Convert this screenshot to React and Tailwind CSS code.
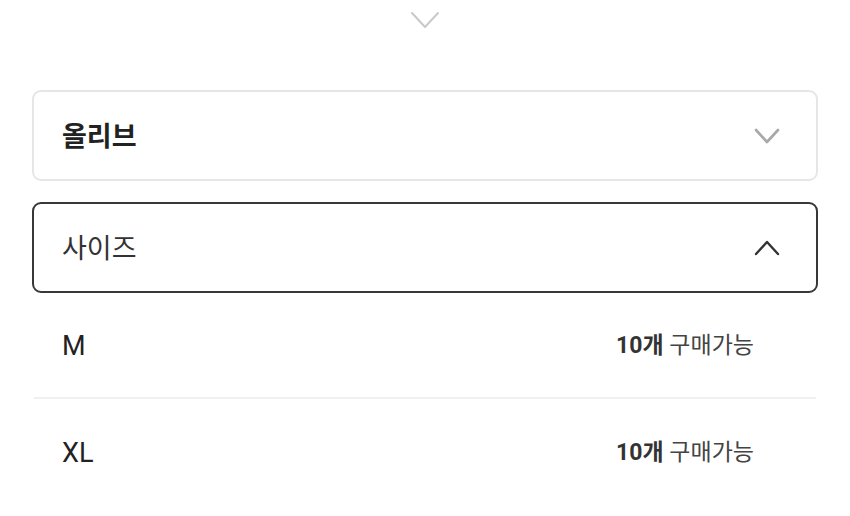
import React from "react";

const font = { fontFamily: 'Roboto, "Noto Sans CJK KR", "Noto Sans", sans-serif' };

function Chevron({ up = false, className = "", width = 24, height = 14, stroke = 2.5 }) {
    const d = up ? `M2 ${height - 2} L${width / 2} 2 L${width - 2} ${height - 2}` : `M2 2 L${width / 2} ${height - 2} L${width - 2} 2`;
    return (
        <svg width={width} height={height} viewBox={`0 0 ${width} ${height}`} className={className} fill="none">
            <path d={d} stroke="currentColor" strokeWidth={stroke} strokeLinecap="round" strokeLinejoin="round" />
        </svg>
    );
}

const sizes = [
    { name: "M", stock: 10 },
    { name: "XL", stock: 10 },
];

export default function App() {
    return (
        <div className="w-[850px] h-[516px] bg-white overflow-hidden" style={font}>
            {/* top toggle */}
            <div className="flex justify-center pt-[11px] h-[90px]">
                <Chevron width={30} height={18} stroke={2} className="text-[#c9c9c9]" />
            </div>

            <div className="px-8 flex flex-col gap-[21px]">
                {/* colour select */}
                <div className="h-[91px] border-2 border-[#e6e6e6] rounded-[9px] flex items-center justify-between pl-[28px] pr-[36px]">
                    <span className="text-[27px] font-bold text-[#222] pt-[3px]">올리브</span>
                    <Chevron className="text-[#a8a8a8]" width={26} height={16} stroke={2.6} />
                </div>

                {/* size select (open) */}
                <div>
                    <div className="h-[91px] border-2 border-[#383838] rounded-[9px] flex items-center justify-between pl-[28px] pr-[36px]">
                        <span className="text-[27px] text-[#333] pt-[3px]">사이즈</span>
                        <Chevron up className="text-[#333]" width={26} height={16} stroke={2.4} />
                    </div>

                    <div className="px-[2px]">
                        {sizes.map((s, i) => (
                            <div
                                key={s.name}
                                className={`h-[106px] flex items-center justify-between pl-[28px] pr-[62px] pt-[3px] ${i === 0 ? "border-b-2 border-[#f0f0f0]" : ""}`}
                            >
                                <span className="text-[27px] text-[#222]">{s.name}</span>
                                <span className="text-[23px] text-[#444]">
                                    <span className="font-bold text-[#333]">{s.stock}개</span> 구매가능
                                </span>
                            </div>
                        ))}
                    </div>
                </div>
            </div>
        </div>
    );
}
